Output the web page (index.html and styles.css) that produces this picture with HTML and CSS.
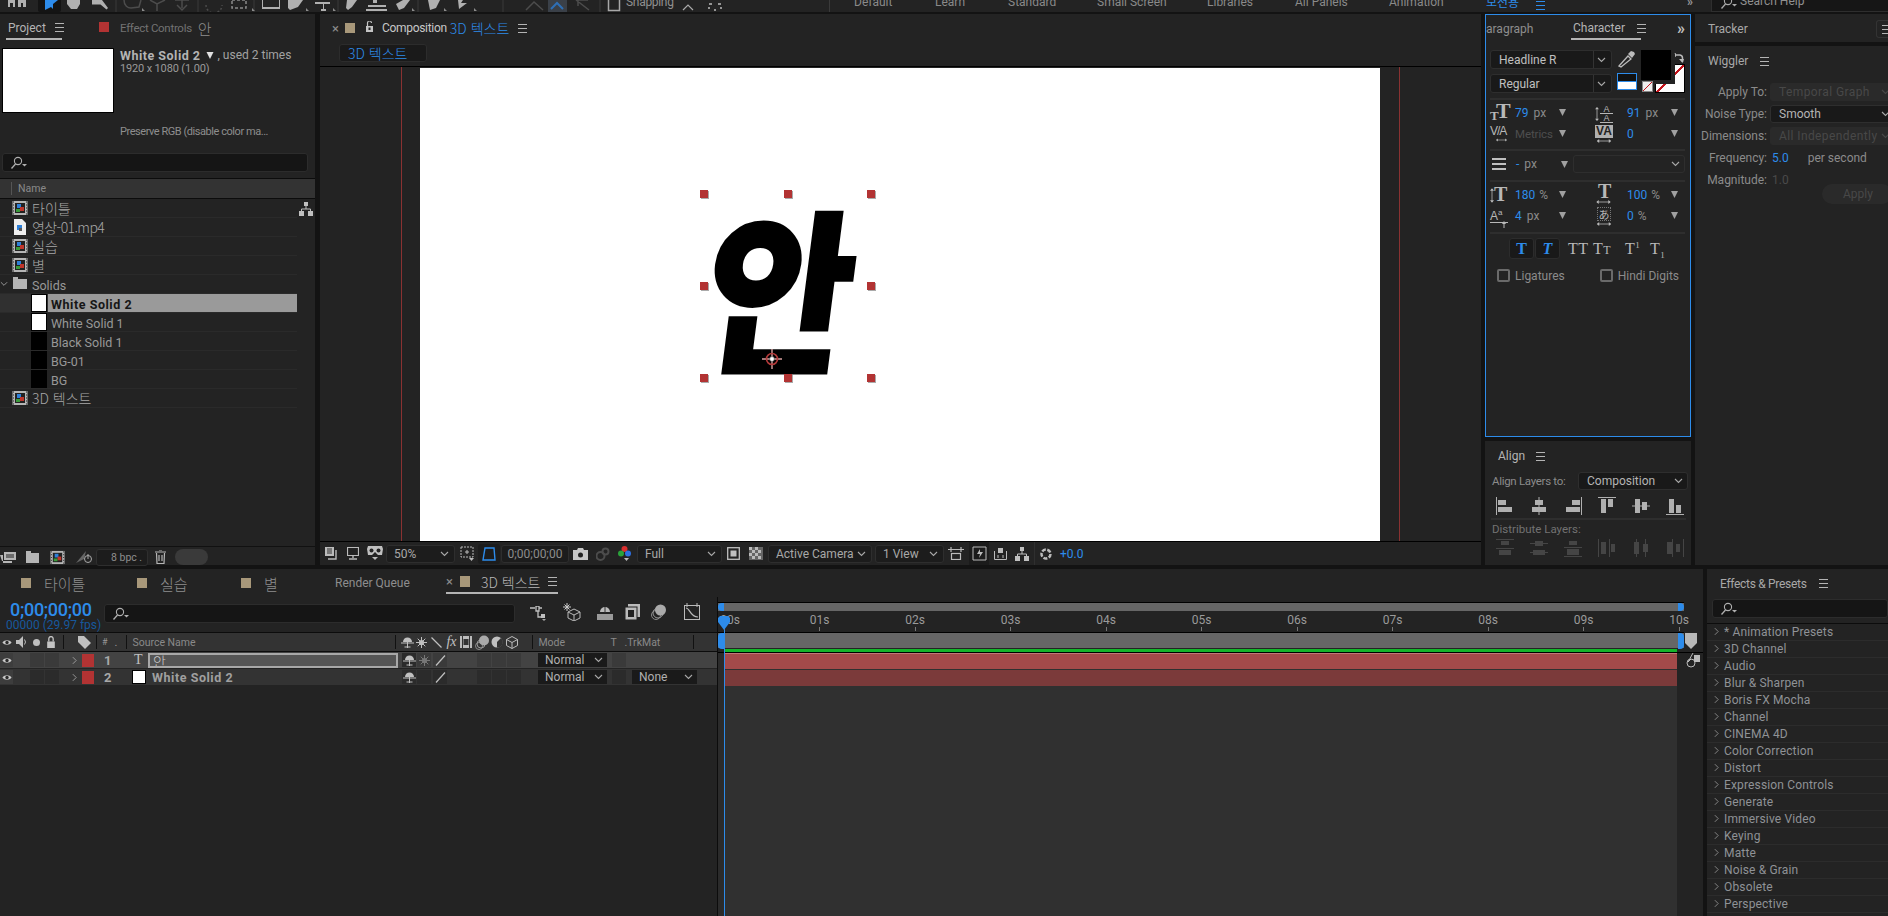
FILE: index.html
```html
<!DOCTYPE html>
<html lang="ko">
<head>
    <meta charset="UTF-8">
    <title>After Effects</title>
    <link rel="stylesheet" href="styles.css">
</head>
<body>
<svg class="defs" width="0" height="0">
    <symbol id="chev" viewBox="0 0 9 6"><path d="M1 1l3.500 3.500L8 1" fill="none" stroke="currentColor" stroke-width="1.100"/></symbol>
    <symbol id="side" viewBox="0 0 6 10"><path d="M1 1l4 4-4 4" fill="none" stroke="currentColor"/></symbol>
    <symbol id="tri" viewBox="0 0 7 7"><path d="M0 0h7L3.500 7z" fill="currentColor"/></symbol>
    <symbol id="arr-h" viewBox="0 0 18 5"><path d="M1 2.500h16" stroke="currentColor"/><path d="M0 2.500L3 0v5zM18 2.500L15 0v5z" fill="currentColor"/></symbol>
    <symbol id="arr-v" viewBox="0 0 5 18"><path d="M2.500 1v16" stroke="currentColor"/><path d="M2.500 0L0 3h5zM2.500 18L0 15h5z" fill="currentColor"/></symbol>
    <symbol id="search" viewBox="0 0 18 14"><circle cx="8" cy="5" r="3.600" fill="none" stroke="currentColor" stroke-width="1.100"/><path d="M5.500 8L1.500 12.500" stroke="currentColor" stroke-width="1.300"/><path d="M12 8h5l-2.500 2.500z" fill="currentColor"/></symbol>
    <symbol id="comp" viewBox="0 0 16 16"><rect x=".5" y="1" width="15" height="14" fill="#b5b5b5"/><rect x="3" y="3" width="10" height="10" fill="#222"/><path d="M1 2h1M1 5h1M1 8h1M1 11h1M1 14h1M14 2h1M14 5h1M14 8h1M14 11h1M14 14h1" stroke="#222"/><rect x="5" y="4" width="4" height="4" fill="#2d7fd8"/><rect x="8" y="7" width="4" height="4" fill="#c0362c"/><rect x="4" y="9" width="4" height="3" fill="#3a9a3a"/></symbol>
    <symbol id="eye" viewBox="0 0 12 8"><path d="M.5 4C3 .5 9 .5 11.500 4 9 7.500 3 7.500.5 4z" fill="#c8c8c8"/><circle cx="6" cy="4" r="2" fill="#2a2a2a"/></symbol>
    <symbol id="shy" viewBox="0 0 13 12"><path d="M2 6a4.500 4.500 0 0 1 9 0z" fill="currentColor"/><path d="M0 7h13M6.500 2v10M3.500 11h6" stroke="currentColor"/></symbol>
    <symbol id="sun" viewBox="0 0 11 11"><circle cx="5.500" cy="5.500" r="2.600" fill="currentColor"/><path d="M5.500 0v11M0 5.500h11M1.700 1.700l7.600 7.600M9.300 1.700l-7.600 7.600" stroke="currentColor"/></symbol>
    <symbol id="slash" viewBox="0 0 11 11"><path d="M1 10.500L10 .5" stroke="currentColor" stroke-width="1.200"/></symbol>
    <symbol id="anchor" viewBox="0 0 20 20"><path d="M10 0v20M0 10h20" stroke="#d8a0a0" stroke-width="1.400"/><circle cx="10" cy="10" r="5.500" fill="none" stroke="#b33a3a" stroke-width="1.600"/><circle cx="10" cy="10" r="2.400" fill="#fff" stroke="#555" stroke-width=".7"/></symbol>
    <symbol id="al1" viewBox="0 0 18 18"><path d="M.5 0v18" stroke="currentColor"/><rect x="2" y="3" width="8" height="5" fill="currentColor"/><rect x="2" y="10" width="14" height="5" fill="currentColor"/></symbol>
    <symbol id="al2" viewBox="0 0 18 18"><path d="M9 0v18" stroke="currentColor"/><rect x="5" y="3" width="8" height="5" fill="currentColor"/><rect x="2" y="10" width="14" height="5" fill="currentColor"/></symbol>
    <symbol id="al3" viewBox="0 0 18 18"><path d="M17.500 0v18" stroke="currentColor"/><rect x="8" y="3" width="8" height="5" fill="currentColor"/><rect x="2" y="10" width="14" height="5" fill="currentColor"/></symbol>
    <symbol id="al4" viewBox="0 0 18 18"><path d="M0 .5h18" stroke="currentColor"/><rect x="3" y="2" width="5" height="14" fill="currentColor"/><rect x="10" y="2" width="5" height="8" fill="currentColor"/></symbol>
    <symbol id="al5" viewBox="0 0 18 18"><path d="M0 9h18" stroke="currentColor"/><rect x="3" y="2" width="5" height="14" fill="currentColor"/><rect x="10" y="5" width="5" height="8" fill="currentColor"/></symbol>
    <symbol id="al6" viewBox="0 0 18 18"><path d="M0 17.500h18" stroke="currentColor"/><rect x="3" y="2" width="5" height="14" fill="currentColor"/><rect x="10" y="8" width="5" height="8" fill="currentColor"/></symbol>
    <symbol id="di1" viewBox="0 0 18 18"><path d="M0 .5h18M0 9.500h18" stroke="currentColor"/><rect x="5" y="2" width="8" height="4" fill="currentColor"/><rect x="3" y="11" width="12" height="5" fill="currentColor"/></symbol>
    <symbol id="di2" viewBox="0 0 18 18"><path d="M0 4.500h18M0 13.500h18" stroke="currentColor"/><rect x="5" y="2" width="8" height="5" fill="currentColor"/><rect x="3" y="11" width="12" height="5" fill="currentColor"/></symbol>
    <symbol id="di3" viewBox="0 0 18 18"><path d="M0 8.500h18M0 17.500h18" stroke="currentColor"/><rect x="5" y="2" width="8" height="4" fill="currentColor"/><rect x="3" y="10" width="12" height="6" fill="currentColor"/></symbol>
    <symbol id="di4" viewBox="0 0 18 18"><path d="M.5 0v18M11.500 0v18" stroke="currentColor"/><rect x="3" y="3" width="5" height="12" fill="currentColor"/><rect x="13" y="5" width="4" height="8" fill="currentColor"/></symbol>
    <symbol id="di5" viewBox="0 0 18 18"><path d="M4.500 0v18M13.500 0v18" stroke="currentColor"/><rect x="2" y="3" width="5" height="12" fill="currentColor"/><rect x="11" y="5" width="5" height="8" fill="currentColor"/></symbol>
    <symbol id="di6" viewBox="0 0 18 18"><path d="M6.500 0v18M17.500 0v18" stroke="currentColor"/><rect x="1" y="3" width="5" height="12" fill="currentColor"/><rect x="10" y="5" width="4" height="8" fill="currentColor"/></symbol>
</svg>

<div class="toolbar">
    <svg class="tool-strip" width="626" height="12" viewBox="0 0 626 12">
        <g fill="#b0b0b0">
            <path d="M8 0h7v7h-2V3h-3v4H8zM18 0h8v7h-3V3h-2v4h-3z"/>
            <rect x="38" y="-2" width="23" height="14" rx="2" fill="#141414"/>
            <path d="M45 0h13l-5 4 0 5-2-2-6 3z" fill="#2d8ceb"/>
            <path d="M67 0h13v4l-3 5h-6l-4-5z"/>
            <path d="M92 0h10l6 8-1.500 1.500-6-5H92z"/>
            <path d="M262 0h1v7h16V0h1v9h-18z"/><path d="M288 0h15l-5 7-8 3-2-2z"/><path d="M315 2h15v2h-6v5h2v2h-5V9h2V4h-8z"/>
            <path d="M347 0h10l-5 7-4 3-2-2z"/><path d="M373 0h4v3h-4zM368 5h18v2h-18zM366 9h21v2h-21z"/><path d="M396 4l7-4h7l-6 8-5 2z"/>
            <path d="M428 0h12l-4 8-6 2z"/><path d="M458 0h5l-2 3 6 0-8 6z"/>
        </g>
        <g fill="none" stroke="#4c4c4c" stroke-width="1.500">
            <path d="M124 0c0 6 4 8 7 8l8-1 2-7M150 0l7 4 8-4M157 3v8M175 0h14M182 0v8M177 5l5 5 5-5"/>
            <path d="M206 5a8 8 0 0 0 16 0" stroke-dasharray="2 2"/><path d="M232 0h14v8h-14z" stroke="#8a8a8a" stroke-dasharray="3 2"/>
            <path d="M526 10l8-8 9 8M576 0l13 10M588 0h-10v6"/>
        </g>
        <rect x="548" y="-2" width="19" height="14" fill="#3a4048"/>
        <path d="M551 9l6-6 6 6" fill="none" stroke="#2e6fb6" stroke-width="2"/>
        <g stroke="#3a3a3a"><path d="M116 0v12M198 0v12M254 0v12M338 0v12M418 0v12M503 0v12M600 0v12"/></g>
        <g fill="#8a8a8a"><path d="M142 8l3 3h-3zM252 8l3 3h-3zM306 8l3 3h-3zM333 8l3 3h-3zM412 8l3 3h-3zM444 8l3 3h-3zM474 8l3 3h-3z"/></g>
        <path d="M608.500 0v10.500h11V0" fill="none" stroke="#a8a8a8" stroke-width="1.500"/>
    </svg>
    <span class="tool-text snapping">Snapping</span>
    <svg class="snap-up" width="12" height="8"><path d="M1 7l5-5 5 5" fill="none" stroke="#aaa" stroke-width="1.200"/></svg>
    <svg class="snap-dots" width="14" height="8"><path d="M1 1h3M10 1h3M1 6v-2M13 6v-2M6 7h2" stroke="#bbb" stroke-width="1.500"/></svg>
    <div class="toolbar-sep"></div>
    <span class="tool-text ws w-default">Default</span>
    <span class="tool-text ws w-learn">Learn</span>
    <span class="tool-text ws w-standard">Standard</span>
    <span class="tool-text ws w-small">Small Screen</span>
    <span class="tool-text ws w-lib">Libraries</span>
    <span class="tool-text ws w-all">All Panels</span>
    <span class="tool-text ws w-anim">Animation</span>
    <span class="tool-text ws w-motion">모션용</span>
    <span class="menu blue w-menu"></span>
    <span class="tool-text more">&raquo;</span>
    <div class="help-box">
        <svg class="ic-search" width="18" height="14"><use href="#search"/></svg>
        <span class="tool-text">Search Help</span>
    </div>
</div>

<div class="upper">
    <section class="panel project">
        <div class="tabs project-tabs">
            <span class="tab active proj-tab">Project <i class="menu"></i></span>
            <span class="swatch red fx-swatch"></span>
            <span class="tab dim">Effect Controls <span class="ko">안</span></span>
        </div>
        <div class="info">
            <div class="thumb"></div>
            <div class="info-text">
                <div><b class="info-name">White Solid 2</b><svg class="info-tri" width="8" height="7"><use href="#tri"/></svg> <span class="info-used">, used 2 times</span></div>
                <div class="info-size">1920 x 1080 (1.00)</div>
                <div class="info-rgb">Preserve RGB (disable color ma...</div>
            </div>
        </div>
        <div class="search project-search"><svg width="18" height="14"><use href="#search"/></svg></div>
        <div class="list-head"><span class="list-name">Name</span></div>
        <div class="rows">
            <svg class="flow-icon" width="14" height="14" viewBox="0 0 14 14"><path d="M5 0h4v4H5zM0 9h5v5H0zM9 9h5v5H9z" fill="#c0c0c0"/><path d="M7 4v3M2.500 9V7h9v2" stroke="#c0c0c0" fill="none"/></svg>
            <div class="row"><svg class="r-ic" width="16" height="16"><use href="#comp"/></svg><span class="ko">타이틀</span></div>
            <div class="row"><svg class="r-ic file" width="12" height="16" viewBox="0 0 12 16"><path d="M0 0h8l4 4v12H0z" fill="#eee"/><rect x="3" y="6" width="5" height="5" fill="#2d7fd8"/><rect x="5" y="9" width="3" height="3" fill="#555"/></svg><span class="ko tight">영상-01.mp4</span></div>
            <div class="row"><svg class="r-ic" width="16" height="16"><use href="#comp"/></svg><span class="ko">실습</span></div>
            <div class="row"><svg class="r-ic" width="16" height="16"><use href="#comp"/></svg><span class="ko">별</span></div>
            <div class="row folder-row"><svg class="fold-chev" width="8" height="6"><use href="#chev"/></svg><svg class="folder" width="14" height="12" viewBox="0 0 14 12"><path d="M0 2h5V0H0zM0 2h14v10H0z" fill="#b5b5b5"/></svg><span class="low">Solids</span></div>
            <div class="row solid sel"><span class="chip white"></span><span class="sel-name low">White Solid 2</span></div>
            <div class="row solid"><span class="chip white"></span><span class="low">White Solid 1</span></div>
            <div class="row solid"><span class="chip"></span><span class="low">Black Solid 1</span></div>
            <div class="row solid"><span class="chip"></span><span class="low">BG-01</span></div>
            <div class="row solid"><span class="chip"></span><span class="low">BG</span></div>
            <div class="row"><svg class="r-ic" width="16" height="16"><use href="#comp"/></svg><span class="ko">3D 텍스트</span></div>
        </div>
        <div class="project-foot">
            <svg width="16" height="13" viewBox="0 0 16 13"><path d="M4 1h12v8H4zM0 4h3v8h9v-2H2" fill="#b5b5b5"/><path d="M6 4h8M6 6h8" stroke="#222"/></svg>
            <svg class="f-folder" width="13" height="12" viewBox="0 0 13 12"><path d="M0 2h5V0H0zM0 2h13v10H0z" fill="#b5b5b5"/></svg>
            <svg class="f-comp" width="17" height="15"><use href="#comp"/></svg>
            <svg class="f-rocket" width="16" height="13" viewBox="0 0 16 13"><path d="M0 12L10 0 8 8z" fill="#666"/><circle cx="12" cy="8" r="3.500" fill="none" stroke="#aaa"/><path d="M12 3v5" stroke="#aaa"/></svg>
            <span class="bpc">8 bpc <i>.</i></span>
            <svg class="trash" width="11" height="14" viewBox="0 0 11 14"><path d="M0 2h11M4 0h3M1.500 3l.5 10.500h7l.5-10.500M4 5v6M7 5v6" fill="none" stroke="#b5b5b5" stroke-width="1.200"/></svg>
            <span class="pill"></span>
        </div>
    </section>

    <section class="panel comp">
        <div class="tabs comp-tabs">
            <span class="close">&times;</span>
            <span class="swatch tan"></span>
            <svg class="lock" width="9" height="11" viewBox="0 0 9 11"><path d="M1 5h7v6H1z" fill="#c4c4c4"/><path d="M2.500 5V2a2 2 0 0 1 4 0" fill="none" stroke="#c4c4c4" stroke-width="1.200"/><rect x="3.500" y="6.500" width="2" height="2.500" fill="#222"/></svg>
            <span class="tab comp-title"><span class="comp-word">Composition</span> <span class="blue-text ko">3D 텍스트</span></span>
            <i class="menu"></i>
        </div>
        <div class="crumbs"><span class="crumb blue-text ko">3D 텍스트</span></div>
        <div class="viewer">
            <div class="guide left"></div>
            <div class="guide right"></div>
            <div class="canvas">
                <span class="glyph">안</span>
                <i class="handle h-tl"></i><i class="handle h-tc"></i><i class="handle h-tr"></i>
                <i class="handle h-ml"></i><i class="handle h-mr"></i>
                <i class="handle h-bl"></i><i class="handle h-bc"></i><i class="handle h-br"></i>
                <svg class="anchor" width="20" height="20"><use href="#anchor"/></svg>
            </div>
        </div>
        <div class="viewer-foot">
            <svg class="v1" width="13" height="13" viewBox="0 0 13 13"><path d="M0 0h9v9H0z" fill="#bbb"/><path d="M2 2h5M2 4h5M2 6h5" stroke="#333"/><path d="M11 3v9H3" fill="none" stroke="#bbb" stroke-width="1.400"/></svg>
            <svg class="v2" width="12" height="13" viewBox="0 0 12 13"><path d="M.5.500h11v8H.5z" fill="none" stroke="#bbb" stroke-width="1.200"/><path d="M6 9v2M2 12h8" stroke="#bbb" stroke-width="1.400"/></svg>
            <svg class="v3" width="16" height="15" viewBox="0 0 16 15"><path d="M1 0h14l1 3-1 6h-4l-3-3-3 3H1L0 3z" fill="#c0c0c0"/><circle cx="4.500" cy="4.500" r="2" fill="#222"/><circle cx="11.500" cy="4.500" r="2" fill="#222"/><path d="M5 11h6l-3 3z" fill="#bbb"/></svg>
            <span class="drop zoom-drop"><span>50%</span><svg class="chev" width="9" height="6"><use href="#chev"/></svg></span>
            <svg class="v4" width="14" height="15" viewBox="0 0 14 15"><path d="M1 1h12v10H1z" fill="none" stroke="#bbb" stroke-dasharray="2 1"/><path d="M7 4v4M5 6h4" stroke="#bbb"/><path d="M9 12h5l-2.500 3z" fill="#bbb"/></svg>
            <span class="mask-btn"><svg width="14" height="14" viewBox="0 0 14 14"><path d="M3 1h9l1 12H1z" fill="none" stroke="#2d8ceb" stroke-width="1.400"/></svg></span>
            <span class="drop time-box">0;00;00;00</span>
            <svg class="v5" width="15" height="12" viewBox="0 0 15 12"><path d="M0 2h4l1-2h5l1 2h4v10H0z" fill="#c8c8c8"/><circle cx="7.500" cy="7" r="2.500" fill="#222"/></svg>
            <svg class="v6" width="14" height="14" viewBox="0 0 14 14"><circle cx="4.500" cy="9" r="4" fill="none" stroke="#4c4c4c" stroke-width="2"/><circle cx="9.500" cy="4.500" r="3" fill="none" stroke="#4c4c4c" stroke-width="2"/></svg>
            <svg class="v7" width="13" height="15" viewBox="0 0 13 15"><circle cx="6.500" cy="3" r="3" fill="#d92e2e"/><circle cx="3" cy="7.500" r="3" fill="#2aa23a"/><circle cx="10" cy="7.500" r="3" fill="#2d6fe0"/><path d="M6 12h5l-2.500 3z" fill="#bbb"/></svg>
            <span class="drop full-drop"><span>Full</span><svg class="chev" width="9" height="6"><use href="#chev"/></svg></span>
            <svg class="v8" width="13" height="13" viewBox="0 0 13 13"><rect x=".7" y=".7" width="11.600" height="11.600" fill="none" stroke="#c0c0c0" stroke-width="1.300"/><rect x="3.500" y="3.500" width="6" height="6" fill="#c0c0c0"/></svg>
            <svg class="v9" width="14" height="13" viewBox="0 0 14 13"><rect width="14" height="13" fill="#666"/><path d="M0 0h3v3H0zM6 0h3v3H6zM3 3h3v3H3zM9 3h3v3H9zM0 6h3v3H0zM6 6h3v3H6zM3 9h3v3H3zM9 9h3v3H9z" fill="#bbb"/></svg>
            <span class="drop cam-drop"><span>Active Camera</span><svg class="chev" width="9" height="6"><use href="#chev"/></svg></span>
            <span class="drop view-drop"><span>1 View</span><svg class="chev" width="9" height="6"><use href="#chev"/></svg></span>
            <svg class="v10" width="16" height="13" viewBox="0 0 16 13"><path d="M0 2.500h16M3 0v5M13 0v5" stroke="#bbb" stroke-width="1.200"/><rect x="3.500" y="6.500" width="9" height="6" fill="none" stroke="#bbb" stroke-width="1.200"/></svg>
            <span class="fast-btn"><svg width="15" height="15" viewBox="0 0 15 15"><path d="M1 1h13v13H1z" fill="none" stroke="#bbb"/><path d="M8 3L5 8h3l-1 4 4-6H8z" fill="#bbb"/></svg></span>
            <svg class="v11" width="13" height="12" viewBox="0 0 13 12"><path d="M.5 3v8.500h12V3M4 7v3M9 7v3" fill="none" stroke="#bbb"/><rect x="4" y="0" width="5" height="5" fill="#bbb"/></svg>
            <svg class="v12" width="14" height="14" viewBox="0 0 14 14"><path d="M5 0h4v4H5zM0 9h5v5H0zM9 9h5v5H9z" fill="#c0c0c0"/><path d="M7 4v3M2.500 9V7h9v2" stroke="#c0c0c0" fill="none"/></svg>
            <i class="foot-sep"></i>
            <svg class="v13" width="12" height="14" viewBox="0 0 12 14"><circle cx="6" cy="7" r="4.500" fill="none" stroke="#bbb" stroke-width="2.500" stroke-dasharray="4 1.500"/></svg>
            <span class="exposure blue-text">+0.0</span>
        </div>
    </section>

    <div class="char-col">
        <section class="panel character">
            <div class="tabs char-tabs">
                <span class="tab para">aragraph</span>
                <span class="tab active char-tab">Character <i class="menu"></i></span>
                <span class="more-tabs">&raquo;</span>
            </div>
            <div class="font-block">
                <div class="font-selects">
                    <span class="select"><span>Headline R</span><svg class="chev" width="9" height="6"><use href="#chev"/></svg></span>
                    <span class="select"><span>Regular</span><svg class="chev" width="9" height="6"><use href="#chev"/></svg></span>
                </div>
                <div class="font-tools">
                    <svg class="dropper" width="19" height="18" viewBox="0 0 19 18"><path d="M2 16l9-10 3 3-10 8z" fill="none" stroke="#bbb" stroke-width="1.300"/><path d="M11 4l3-3 3 1 1 2-3 4z" fill="#bbb"/></svg>
                    <span class="stroke-toggle"></span>
                </div>
                <div class="color-box">
                    <span class="stroke-swatch"></span>
                    <span class="fill-swatch"></span>
                    <span class="mini-swatch"></span>
                    <svg class="swap" width="12" height="11" viewBox="0 0 12 11"><path d="M1 2h7a3 3 0 0 1 2.500 3v4" fill="none" stroke="#bbb" stroke-width="1.500"/><path d="M7 6l3.500 4L12 6zM4 0L0 2l4 2z" fill="#bbb"/></svg>
                </div>
            </div>
            <div class="sep"></div>
            <div class="metrics m-top">
                <div class="metric"><span class="m-ic t-big"><b>T</b><b class="up">T</b></span><span class="val">79</span><span class="unit">px</span><svg class="tri" width="7" height="7"><use href="#tri"/></svg></div>
                <div class="metric col-b"><span class="m-ic t-lead"><svg class="arr-v" width="4" height="14"><use href="#arr-v"/></svg><span>A</span><span>A</span></span><span class="val">91</span><span class="unit">px</span><svg class="tri" width="7" height="7"><use href="#tri"/></svg></div>
                <div class="metric"><span class="m-ic t-kern">V/A<svg class="arr-h" width="11" height="4"><use href="#arr-h"/></svg></span><span class="val off">Metrics</span><svg class="tri" width="7" height="7"><use href="#tri"/></svg></div>
                <div class="metric col-b"><span class="m-ic t-track"><span>VA</span><svg class="arr-h" width="18" height="4"><use href="#arr-h"/></svg></span><span class="val">0</span><svg class="tri" width="7" height="7"><use href="#tri"/></svg></div>
            </div>
            <div class="sep s-two"></div>
            <div class="stroke-row">
                <svg class="stroke-ic" width="14" height="12" viewBox="0 0 14 12"><path d="M0 0h14v2H0zM0 5h14v2H0zM0 10h14v2H0z" fill="#c0c0c0"/></svg>
                <span class="val dash">-</span><span class="unit">px</span>
                <svg class="tri" width="7" height="7"><use href="#tri"/></svg>
                <span class="select stroke-select"><svg class="chev" width="9" height="6"><use href="#chev"/></svg></span>
            </div>
            <div class="sep s-three"></div>
            <div class="metrics m-bottom">
                <div class="metric"><span class="m-ic t-vs"><svg class="arr-v" width="4" height="15"><use href="#arr-v"/></svg><b>T</b></span><span class="val">180</span><span class="unit pct">%</span><svg class="tri" width="7" height="7"><use href="#tri"/></svg></div>
                <div class="metric col-b"><span class="m-ic t-hs"><b>T</b><svg class="arr-h" width="17" height="4"><use href="#arr-h"/></svg></span><span class="val">100</span><span class="unit pct">%</span><svg class="tri" width="7" height="7"><use href="#tri"/></svg></div>
                <div class="metric"><span class="m-ic t-base">A<sup>a</sup><svg class="arr-base" width="4" height="7" viewBox="0 0 4 7"><path d="M2 1v6" stroke="currentColor"/><path d="M2 0L0 3h4z" fill="currentColor"/></svg></span><span class="val">4</span><span class="unit">px</span><svg class="tri" width="7" height="7"><use href="#tri"/></svg></div>
                <div class="metric col-b"><span class="m-ic t-tsume"><span>あ</span><svg class="arr-h" width="16" height="4"><use href="#arr-h"/></svg></span><span class="val">0</span><span class="unit pct">%</span><svg class="tri" width="7" height="7"><use href="#tri"/></svg></div>
            </div>
            <div class="sep s-four"></div>
            <div class="type-row">
                <span class="type-btn on bold-t">T</span>
                <span class="type-btn on ital-t">T</span>
                <span class="type-plain tt">TT</span>
                <span class="type-plain ts">T<small>T</small></span>
                <span class="type-plain sup">T<sup>1</sup></span>
                <span class="type-plain sub">T<sub>1</sub></span>
            </div>
            <div class="check-row">
                <span class="check"></span><span class="check-label">Ligatures</span>
                <span class="check c2"></span><span class="check-label">Hindi Digits</span>
            </div>
        </section>
        <section class="panel align">
            <div class="align-head"><span>Align</span><i class="menu"></i></div>
            <div class="align-to"><span class="label">Align Layers to:</span><span class="select comp-select"><span>Composition</span><svg class="chev" width="9" height="6"><use href="#chev"/></svg></span></div>
            <div class="align-icons">
                <svg width="18" height="18"><use href="#al1"/></svg><svg width="18" height="18"><use href="#al2"/></svg><svg width="18" height="18"><use href="#al3"/></svg><svg width="18" height="18"><use href="#al4"/></svg><svg width="18" height="18"><use href="#al5"/></svg><svg width="18" height="18"><use href="#al6"/></svg>
            </div>
            <div class="sep s-align"></div>
            <div class="label dist-label">Distribute Layers:</div>
            <div class="align-icons dist">
                <svg width="18" height="18"><use href="#di1"/></svg><svg width="18" height="18"><use href="#di2"/></svg><svg width="18" height="18"><use href="#di3"/></svg><svg width="18" height="18"><use href="#di4"/></svg><svg width="18" height="18"><use href="#di5"/></svg><svg width="18" height="18"><use href="#di6"/></svg>
            </div>
        </section>
    </div>

    <div class="right-col">
        <section class="panel tracker">
            <span class="tracker-title">Tracker</span>
            <span class="tracker-btn"><i class="menu"></i></span>
        </section>
        <section class="panel wiggler">
            <div class="wig-head"><span>Wiggler</span><i class="menu"></i></div>
            <div class="wig-row"><span class="label">Apply To:</span><span class="select off"><span>Temporal Graph</span><svg class="chev" width="9" height="6"><use href="#chev"/></svg></span></div>
            <div class="wig-row"><span class="label">Noise Type:</span><span class="select"><span>Smooth</span><svg class="chev" width="9" height="6"><use href="#chev"/></svg></span></div>
            <div class="wig-row"><span class="label">Dimensions:</span><span class="select off"><span>All Independently</span><svg class="chev" width="9" height="6"><use href="#chev"/></svg></span></div>
            <div class="wig-row"><span class="label">Frequency:</span><span class="blue-text wig-val">5.0</span><span class="label per">per second</span></div>
            <div class="wig-row"><span class="label">Magnitude:</span><span class="off-text wig-val">1.0</span></div>
            <span class="apply-btn">Apply</span>
        </section>
    </div>
</div>

<div class="lower">
    <section class="panel timeline">
        <div class="tl-tabs">
            <span class="swatch tan t1"></span><span class="tl-tab ko n1">타이틀</span>
            <span class="swatch tan t2"></span><span class="tl-tab ko n2">실습</span>
            <span class="swatch tan t3"></span><span class="tl-tab ko n3">별</span>
            <span class="tl-tab rq">Render Queue</span>
            <div class="tl-active">
                <span class="close">&times;</span>
                <span class="swatch tan"></span>
                <span class="tl-cur ko">3D 텍스트</span>
                <i class="menu"></i>
            </div>
        </div>
        <div class="tl-body">
            <div class="tl-left">
                <div class="tl-controls">
                    <div class="timecode">
                        <div class="tc-main">0;00;00;00</div>
                        <div class="tc-sub">00000 (29.97 fps)</div>
                    </div>
                    <div class="search tl-search"><svg width="18" height="14"><use href="#search"/></svg></div>
                    <svg class="tc1" width="17" height="15" viewBox="0 0 17 15"><path d="M0 2h5M6 0h3v5H6zM9 2h3M8 5v6h5" stroke="#c0c0c0" fill="none" stroke-width="1.300"/><rect x="11" y="8" width="4" height="4" fill="#c0c0c0"/><path d="M12 13h4l-2 2z" fill="#aaa"/></svg>
                    <svg class="tc2" width="18" height="18" viewBox="0 0 18 18"><path d="M4 0v8M0 4h8M1.500 1.500l5 5M6.500 1.500l-5 5" stroke="#ccc"/><path d="M11 6l6 3v6l-6 3-6-3V9zM5 9l6 3 6-3M11 12v6" fill="none" stroke="#bbb"/></svg>
                    <svg class="tc3" width="16" height="14" viewBox="0 0 16 14"><path d="M3 6a5 5 0 0 1 10 0z" fill="#bbb"/><path d="M8 1v6" stroke="#333"/><rect y="8" width="16" height="6" fill="#9a9a9a"/></svg>
                    <svg class="tc4" width="15" height="16" viewBox="0 0 15 16"><rect x="3" y="0" width="12" height="13" fill="#bbb"/><rect y="3" width="12" height="13" fill="#bbb" stroke="#222"/><path d="M3 6h6v7H3z" fill="#222"/></svg>
                    <svg class="tc5" width="15" height="16" viewBox="0 0 15 16"><circle cx="5" cy="11" r="4.500" fill="none" stroke="#888"/><circle cx="7" cy="9" r="5" fill="none" stroke="#999"/><circle cx="9.500" cy="6" r="5.500" fill="#aaa"/></svg>
                    <svg class="tc6" width="16" height="17" viewBox="0 0 16 17"><rect x=".5" y="2.500" width="15" height="14" fill="none" stroke="#bbb"/><path d="M2 5c4 0 4 9 12 9" fill="none" stroke="#bbb" stroke-width="1.200"/><path d="M3 0v4M13 0v4" stroke="#bbb"/></svg>
                </div>
                <div class="tl-head">
                    <svg class="hd eye-hd" width="10" height="7"><use href="#eye"/></svg>
                    <svg class="hd spk" width="11" height="12" viewBox="0 0 11 12"><path d="M0 4h3l4-4v12L3 8H0z" fill="#c0c0c0"/><path d="M8.500 3.500a4 4 0 0 1 0 5" stroke="#c0c0c0" fill="none"/></svg>
                    <span class="hd dot"></span>
                    <svg class="hd lock-hd" width="10" height="12" viewBox="0 0 9 11"><path d="M1 5h7v6H1z" fill="#c4c4c4"/><path d="M2.500 5V2.500a2 2 0 0 1 4 0V5" fill="none" stroke="#c4c4c4" stroke-width="1.200"/></svg>
                    <i class="head-sep s1"></i>
                    <svg class="hd tag" width="13" height="13" viewBox="0 0 13 13"><path d="M0 0h6l7 7-6 6-7-7z" fill="#c0c0c0"/></svg>
                    <i class="head-sep s2"></i>
                    <span class="hd num">#</span>
                    <span class="hd period">.</span>
                    <i class="head-sep s3"></i>
                    <span class="src src-name">Source Name</span>
                    <i class="head-sep s4"></i>
                    <svg class="sw sw1" width="13" height="12"><use href="#shy"/></svg>
                    <svg class="sw sw2" width="11" height="11"><use href="#sun"/></svg>
                    <svg class="sw sw3" width="11" height="11" viewBox="0 0 11 11"><path d="M.5.500L10.500 10.500" stroke="currentColor" stroke-width="1.300"/></svg>
                    <span class="sw sw4">fx</span>
                    <svg class="sw sw5" width="12" height="12" viewBox="0 0 12 12"><rect width="12" height="12" fill="#bbb"/><path d="M2.500 0v12M9.500 0v12" stroke="#333"/><rect x="3.500" y="3" width="5" height="6" fill="#333"/></svg>
                    <svg class="sw sw6" width="14" height="15" viewBox="0 0 14 15"><circle cx="4" cy="11" r="3.500" fill="none" stroke="#888"/><circle cx="6" cy="9" r="4" fill="none" stroke="#999"/><circle cx="9" cy="5.500" r="5" fill="#aaa"/></svg>
                    <svg class="sw sw7" width="12" height="12" viewBox="0 0 12 12"><circle cx="6" cy="6" r="5.500" fill="#c0c0c0"/><path d="M6 6L10 2A5.500 5.500 0 0 1 6 11.500z" fill="#333"/></svg>
                    <svg class="sw sw8" width="12" height="13" viewBox="0 0 12 13"><path d="M6 .5l5.500 3v6l-5.500 3-5.500-3v-6zM.5 3.500l5.500 3 5.500-3M6 6.500v6" fill="none" stroke="#bbb"/></svg>
                    <i class="head-sep s5"></i>
                    <span class="src mode">Mode</span>
                    <span class="src t-col">T</span>
                    <span class="src trk">.TrkMat</span>
                    <i class="head-sep s6"></i>
                </div>
                <div class="layer first">
                    <span class="cell eye-cell"><svg width="10" height="7"><use href="#eye"/></svg></span>
                    <span class="cell c-a"></span><span class="cell c-b"></span>
                    <svg class="lay-chev" width="5" height="9"><use href="#side"/></svg>
                    <span class="label-red"></span>
                    <span class="lay-num">1</span>
                    <span class="lay-type">T</span>
                    <span class="name-edit ko">안</span>
                    <span class="cell c-shy"><svg width="13" height="12"><use href="#shy"/></svg></span>
                    <span class="cell c-sun"><svg width="11" height="11"><use href="#sun"/></svg></span>
                    <span class="cell c-slash"><svg width="11" height="11"><use href="#slash"/></svg></span>
                    <span class="cell c-1"></span><span class="cell c-2"></span><span class="cell c-2"></span>
                    <span class="mode-drop"><span>Normal</span><svg class="chev" width="9" height="6"><use href="#chev"/></svg></span>
                    <span class="cell c-t"></span>
                </div>
                <div class="layer">
                    <span class="cell eye-cell"><svg width="10" height="7"><use href="#eye"/></svg></span>
                    <span class="cell c-a"></span><span class="cell c-b"></span>
                    <svg class="lay-chev" width="5" height="9"><use href="#side"/></svg>
                    <span class="label-red"></span>
                    <span class="lay-num">2</span>
                    <span class="lay-chip"></span>
                    <span class="lay-name">White Solid 2</span>
                    <span class="cell c-shy"><svg width="13" height="12"><use href="#shy"/></svg></span>
                    <span class="cell c-sun"></span>
                    <span class="cell c-slash"><svg width="11" height="11"><use href="#slash"/></svg></span>
                    <span class="cell c-1"></span><span class="cell c-2"></span><span class="cell c-2"></span>
                    <span class="mode-drop"><span>Normal</span><svg class="chev" width="9" height="6"><use href="#chev"/></svg></span>
                    <span class="cell c-t"></span>
                    <span class="mode-drop none"><span>None</span><svg class="chev" width="9" height="6"><use href="#chev"/></svg></span>
                </div>
            </div>
            <div class="tl-right">
                <div class="nav-gap"></div>
                <div class="nav-bar"><i class="grip left"></i><i class="grip right"></i></div>
                <div class="ruler">
                    <span class="tick first"><em>00s</em><i></i></span><span class="tick"><em>01s</em><i></i></span><span class="tick"><em>02s</em><i></i></span><span class="tick"><em>03s</em><i></i></span><span class="tick"><em>04s</em><i></i></span><span class="tick"><em>05s</em><i></i></span><span class="tick"><em>06s</em><i></i></span><span class="tick"><em>07s</em><i></i></span><span class="tick"><em>08s</em><i></i></span><span class="tick"><em>09s</em><i></i></span><span class="tick"><em>10s</em><i></i></span>
                </div>
                <div class="work-area">
                    <div class="work-bar"><i class="grip left big"></i><i class="grip right big"></i></div>
                    <div class="green"></div>
                </div>
                <div class="tracks">
                    <div class="track one"></div>
                    <div class="track two"></div>
                </div>
                <svg class="cti" width="12" height="14" viewBox="0 0 12 14"><path d="M2 0h8l2 2v4l-6 8-6-8V2z" fill="#2d8ceb"/></svg>
                <i class="playhead"></i>
                <svg class="end-mark" width="12" height="16" viewBox="0 0 12 16"><path d="M0 0h12v10l-6 6-6-6z" fill="#b8b8b8"/></svg>
                <svg class="lift-mark" width="15" height="16" viewBox="0 0 15 16"><circle cx="5" cy="11" r="4" fill="none" stroke="#bbb"/><path d="M5 7L2 10l5-9" stroke="#bbb" fill="none"/><rect x="8" y="3" width="6" height="7" fill="#bbb"/></svg>
            </div>
        </div>
    </section>
    <section class="panel effects">
        <div class="fx-head"><span>Effects &amp; Presets</span><i class="menu"></i></div>
        <div class="search fx-search"><svg width="18" height="14"><use href="#search"/></svg></div>
        <div class="fx-list">
            <div class="fx-row"><svg width="5" height="9"><use href="#side"/></svg><span>* Animation Presets</span></div>
            <div class="fx-row"><svg width="5" height="9"><use href="#side"/></svg><span>3D Channel</span></div>
            <div class="fx-row"><svg width="5" height="9"><use href="#side"/></svg><span>Audio</span></div>
            <div class="fx-row"><svg width="5" height="9"><use href="#side"/></svg><span>Blur &amp; Sharpen</span></div>
            <div class="fx-row"><svg width="5" height="9"><use href="#side"/></svg><span>Boris FX Mocha</span></div>
            <div class="fx-row"><svg width="5" height="9"><use href="#side"/></svg><span>Channel</span></div>
            <div class="fx-row"><svg width="5" height="9"><use href="#side"/></svg><span>CINEMA 4D</span></div>
            <div class="fx-row"><svg width="5" height="9"><use href="#side"/></svg><span>Color Correction</span></div>
            <div class="fx-row"><svg width="5" height="9"><use href="#side"/></svg><span>Distort</span></div>
            <div class="fx-row"><svg width="5" height="9"><use href="#side"/></svg><span>Expression Controls</span></div>
            <div class="fx-row"><svg width="5" height="9"><use href="#side"/></svg><span>Generate</span></div>
            <div class="fx-row"><svg width="5" height="9"><use href="#side"/></svg><span>Immersive Video</span></div>
            <div class="fx-row"><svg width="5" height="9"><use href="#side"/></svg><span>Keying</span></div>
            <div class="fx-row"><svg width="5" height="9"><use href="#side"/></svg><span>Matte</span></div>
            <div class="fx-row"><svg width="5" height="9"><use href="#side"/></svg><span>Noise &amp; Grain</span></div>
            <div class="fx-row"><svg width="5" height="9"><use href="#side"/></svg><span>Obsolete</span></div>
            <div class="fx-row"><svg width="5" height="9"><use href="#side"/></svg><span>Perspective</span></div>
        </div>
    </section>
</div>
</body>
</html>
```

FILE: styles.css
```css
* {
    box-sizing: border-box;
}
html, body {
    margin: 0;
    padding: 0;
}
body {
    width: 1888px;
    height: 916px;
    overflow: hidden;
    background-color: #131313;
    color: #a2a2a2;
    font-family: Roboto, "Noto Sans CJK KR", sans-serif;
    font-size: 11px;
}
i, em {
    font-style: normal;
}
svg {
    display: block;
    flex: none;
}
.defs {
    position: absolute;
}
.panel {
    background-color: #232323;
    position: relative;
}
.ko {
    font-family: "Noto Sans CJK KR", sans-serif;
    font-weight: 300;
}
.blue-text {
    color: #2d8ceb;
}
.off-text {
    color: #4a4a4a;
}
.chev {
    color: #a8a8a8;
    margin-left: auto;
}
.menu {
    display: inline-block;
    width: 9px;
    height: 9px;
    border-top: 1px solid #b4b4b4;
    border-bottom: 1px solid #b4b4b4;
    background: linear-gradient(#b4b4b4, #b4b4b4) center / 100% 1px no-repeat;
    flex: none;
}
.menu.blue {
    border-color: #2d8ceb;
    background-image: linear-gradient(#2d8ceb, #2d8ceb);
}
.swatch {
    display: block;
    width: 10px;
    height: 10px;
    flex: none;
}
.swatch.red {
    background-color: #b23333;
}
.swatch.tan {
    background-color: #a8987a;
}
.close {
    color: #8c8c8c;
    font-size: 13px;
    line-height: 1;
}
.search {
    display: flex;
    align-items: center;
    height: 19px;
    padding-left: 7px;
    background-color: #151515;
    border: 1px solid #2c2c2c;
    border-radius: 3px;
    color: #b0b0b0;
}
.select {
    display: flex;
    align-items: center;
    background-color: #191919;
    border: 1px solid #2e2e2e;
    border-radius: 3px;
    color: #b4b4b4;
    padding: 0 4px 0 8px;
}
.label {
    color: #8b8b8b;
    white-space: nowrap;
}

/* barra de ferramentas, cortada no topo */
.toolbar {
    display: flex;
    align-items: flex-end;
    height: 12px;
    overflow: hidden;
    background-color: #232323;
    color: #909090;
}
.tool-strip {
    align-self: flex-start;
}
.tool-text {
    flex: none;
    line-height: 16px;
    padding-bottom: 2px;
    font-size: 12px;
}
.snapping {
    width: 56px;
    letter-spacing: -.3px;
}
.snap-up {
    margin-bottom: 1px;
}
.snap-dots {
    margin: 0 0 1px 14px;
}
.toolbar-sep {
    align-self: stretch;
    width: 1px;
    margin-left: 107px;
    background-color: #3a3a3a;
}
.ws {
    color: #8a8a8a;
}
.w-default { margin-left: 24px; width: 81px; }
.w-learn { width: 73px; }
.w-standard { width: 89px; }
.w-small { width: 110px; }
.w-lib { width: 88px; }
.w-all { width: 94px; }
.w-anim { width: 97px; }
.w-motion { width: 50px; color: #2d8ceb; font-family: "Noto Sans CJK KR", sans-serif; }
.w-menu { margin-bottom: 2px; }
.more {
    margin-left: 142px;
    font-weight: 700;
    color: #999;
}
.help-box {
    display: flex;
    align-items: flex-end;
    align-self: stretch;
    flex: 1;
    margin-left: 18px;
    padding-left: 8px;
    background-color: #161616;
    border-left: 1px solid #2e2e2e;
    border-bottom: 1px solid #2e2e2e;
    gap: 2px;
}
.ic-search {
    margin-bottom: 1px;
    color: #aaa;
}

.upper {
    display: flex;
    height: 551px;
    margin-top: 2px;
}
.lower {
    display: flex;
    height: 347px;
    margin-top: 4px;
}
.tabs {
    display: flex;
    align-items: center;
    height: 28px;
}
.tab {
    display: flex;
    align-items: center;
    white-space: nowrap;
    color: #b4b4b4;
    font-size: 12px;
    height: 100%;
}
.tab.dim {
    color: #727272;
    margin-left: 11px;
    gap: 6px;
    font-size: 11.500px;
    letter-spacing: -.3px;
}
.tab.dim .ko {
    font-size: 15px;
    color: #8e8e8e;
}
.tab.active {
    border-bottom: 2px solid #b4b4b4;
    height: 26px;
    padding-top: 3px;
}
.project-tabs {
    align-items: flex-start;
}
.project-tabs .swatch {
    margin-top: 8px;
}

/* projeto */
.project {
    display: flex;
    flex-direction: column;
    width: 315px;
}
.proj-tab {
    width: 56px;
    margin-left: 6px;
    padding-left: 2px;
    gap: 9px;
}
.fx-swatch {
    margin-left: 37px;
}
.info {
    display: flex;
    height: 111px;
    padding: 6px 0 0 2px;
}
.thumb {
    width: 112px;
    height: 65px;
    background-color: #fff;
    border: 1px solid #000;
}
.info-text {
    margin-left: 6px;
    font-size: 12px;
    line-height: 13px;
    position: relative;
    flex: 1;
}
.info-text > div:first-child {
    display: flex;
    align-items: center;
    white-space: nowrap;
    margin-top: 1px;
}
.info-name {
    color: #b4b4b4;
    font-size: 12.500px;
    letter-spacing: .5px;
}
.info-tri {
    margin-left: 5px;
    color: #e0e0e0;
}
.info-used {
    margin-left: 4px;
    white-space: pre;
}
.info-size {
    color: #9a9a9a;
    font-size: 11px;
    letter-spacing: -.15px;
}
.info-rgb {
    margin-top: 50px;
    color: #8e8e8e;
    font-size: 11px;
    letter-spacing: -.45px;
}
.project-search {
    width: 306px;
    margin-left: 2px;
}
.list-head {
    display: flex;
    align-items: center;
    height: 21px;
    margin-top: 6px;
    background-color: #333;
    border-top: 1px solid #0c0c0c;
    border-bottom: 1px solid #0c0c0c;
}
.list-name {
    margin-left: 11px;
    padding-left: 6px;
    border-left: 1px solid #555;
    color: #8a8a8a;
    font-size: 10.500px;
}
.rows {
    width: 297px;
    position: relative;
    font-size: 12.500px;
}
.flow-icon {
    position: absolute;
    left: 299px;
    top: 3px;
}
.row {
    display: flex;
    align-items: center;
    height: 19px;
    padding-left: 12px;
    border-bottom: 1px solid #2a2a2a;
    color: #989898;
    white-space: nowrap;
}
.row .low {
    padding-top: 3px;
}
.r-ic {
    margin-right: 4px;
}
.r-ic.file {
    margin: 0 6px 0 2px;
}
.row .ko {
    font-size: 14px;
    color: #a8a8a8;
}
.row .tight {
    letter-spacing: -.6px;
}
.folder-row {
    padding-left: 0;
}
.fold-chev {
    color: #999;
    margin: 0 5px 0 0;
}
.folder {
    margin: -3px 5px 0 0;
}
.solid {
    padding-left: 31px;
    gap: 4px;
}
.chip {
    width: 16px;
    height: 18px;
    background-color: #000;
    flex: none;
}
.chip.white {
    background-color: #fff;
    border: 1px solid #000;
}
.sel {
    background: linear-gradient(90deg, #303030 48px, #9a9a9a 48px);
    color: #111;
    font-weight: 700;
    letter-spacing: .55px;
}
.sel-name {
    color: #161616;
}
.project-foot {
    display: flex;
    align-items: center;
    height: 19px;
    margin-top: auto;
    border-top: 1px solid #111;
    padding-top: 2px;
}
.f-folder { margin-left: 10px; }
.f-comp { margin-left: 10px; }
.f-rocket { margin-left: 10px; }
.bpc {
    display: flex;
    align-items: center;
    justify-content: space-between;
    width: 52px;
    height: 17px;
    margin-left: 4px;
    padding: 0 5px 0 14px;
    background-color: #1c1c1c;
    border: 1px solid #2e2e2e;
    border-radius: 3px;
    color: #8e8e8e;
    font-size: 10.500px;
}
.trash { margin-left: 7px; }
.pill {
    width: 33px;
    height: 16px;
    margin-left: 9px;
    border-radius: 8px;
    background-color: #3a3a3a;
}

/* composicao */
.comp {
    display: flex;
    flex-direction: column;
    width: 1161px;
    margin-left: 5px;
}
.comp-tabs {
    padding-left: 12px;
}
.comp-tabs .swatch {
    margin-left: 6px;
}
.lock {
    margin: -4px 0 0 10px;
}
.comp-title {
    margin-left: 8px;
    gap: 3px;
    color: #c8c8c8;
}
.comp-word {
    letter-spacing: -.3px;
}
.comp-title .ko {
    font-size: 14px;
}
.comp-tabs .menu {
    margin-left: 9px;
}
.crumbs {
    height: 24px;
    padding: 2px 0 0 19px;
}
.crumb {
    display: block;
    width: 88px;
    height: 18px;
    padding-left: 8px;
    line-height: 16px;
    background-color: #1a1a1a;
    border: 1px solid #2c2c2c;
    border-radius: 3px;
    font-size: 14px;
}
.viewer {
    position: relative;
    height: 476px;
    border-top: 1px solid #000;
    border-bottom: 1px solid #000;
    overflow: hidden;
}
.guide {
    position: absolute;
    top: 0;
    bottom: 0;
    width: 1px;
    background-color: #8a3232;
}
.guide.left { left: 81px; }
.guide.right { left: 1079px; }
.canvas {
    position: absolute;
    left: 100px;
    top: 1px;
    width: 960px;
    height: 540px;
    background-color: #fff;
}
.glyph {
    position: absolute;
    left: 282px;
    top: 128px;
    color: #000;
    font-family: "Noto Sans CJK KR", sans-serif;
    font-weight: 900;
    font-size: 174px;
    line-height: 1;
    -webkit-text-stroke: 3px #000;
    transform: scaleX(.92) skewX(-8deg);
}
.handle {
    position: absolute;
    width: 8px;
    height: 8px;
    background-color: #b23333;
    box-shadow: 1px 1px 0 #aaa;
}
.h-tl { left: 280px; top: 122px; }
.h-tc { left: 364px; top: 122px; }
.h-tr { left: 447px; top: 122px; }
.h-ml { left: 280px; top: 214px; }
.h-mr { left: 447px; top: 214px; }
.h-bl { left: 280px; top: 306px; }
.h-bc { left: 364px; top: 306px; }
.h-br { left: 447px; top: 306px; }
.anchor {
    position: absolute;
    left: 342px;
    top: 281px;
}
.viewer-foot {
    display: flex;
    align-items: center;
    height: 23px;
}
.drop {
    display: flex;
    align-items: center;
    height: 18px;
    padding: 0 5px 0 7px;
    background-color: #1c1c1c;
    border: 1px solid #2e2e2e;
    border-radius: 3px;
    color: #a8a8a8;
    font-size: 12px;
    flex: none;
}
.v1 { margin-left: 5px; }
.v2 { margin-left: 9px; }
.v3 { margin-left: 8px; }
.zoom-drop { width: 69px; margin-left: 3px; }
.v4 { margin-left: 5px; }
.mask-btn {
    display: flex;
    align-items: center;
    justify-content: center;
    width: 22px;
    height: 20px;
    margin-left: 4px;
    background-color: #1c1c1c;
    border-radius: 3px;
}
.time-box { width: 68px; margin-left: 1px; justify-content: center; padding: 0; color: #8c8c8c; }
.v5 { margin-left: 4px; }
.v6 { margin-left: 8px; }
.v7 { margin-left: 8px; }
.full-drop { width: 85px; margin-left: 6px; }
.v8 { margin-left: 5px; }
.v9 { margin-left: 9px; }
.cam-drop { width: 104px; margin-left: 5px; }
.view-drop { width: 69px; margin-left: 3px; }
.v10 { margin-left: 4px; }
.fast-btn {
    display: flex;
    align-items: center;
    justify-content: center;
    width: 20px;
    height: 23px;
    margin-left: 5px;
    background-color: #1b1b1b;
}
.v11 { margin-left: 5px; }
.v12 { margin-left: 8px; }
.foot-sep {
    width: 1px;
    height: 23px;
    margin-left: 5px;
    background-color: #2f2f2f;
}
.v13 { margin-left: 5px; }
.exposure { margin-left: 8px; font-size: 12px; }

/* character */
.char-col {
    display: flex;
    flex-direction: column;
    width: 206px;
    margin-left: 4px;
}
.character {
    height: 423px;
    border: 1px solid #2d8ceb;
    padding-top: 0;
}
.char-tabs {
    height: 25px;
    overflow: hidden;
    position: relative;
}
.para {
    margin-left: 0;
    width: 85px;
    color: #8e8e8e;
    padding-top: 3px;
}
.tab.char-tab {
    gap: 12px;
    padding: 3px 0 0 2px;
    width: 70px;
    height: 25px;
}
.more-tabs {
    margin-left: 36px;
    padding-top: 2px;
    font-size: 16px;
    font-weight: 700;
    color: #c0c0c0;
}
.font-block {
    display: flex;
    padding: 10px 0 0 4px;
    height: 58px;
    position: relative;
}
.font-selects {
    display: flex;
    flex-direction: column;
    gap: 5px;
    width: 122px;
}
.font-selects .select {
    height: 19px;
    font-size: 12px;
    padding-right: 5px;
    position: relative;
    color: #c0c0c0;
}
.font-selects .select::after {
    content: "";
    position: absolute;
    right: 17px;
    top: 0;
    bottom: 0;
    width: 1px;
    background-color: #333;
}
.font-tools {
    display: flex;
    flex-direction: column;
    margin-left: 5px;
    gap: 5px;
}
.stroke-toggle {
    display: block;
    width: 20px;
    height: 17px;
    border: 1px solid #2d8ceb;
    background: linear-gradient(#111 47%, #2d8ceb 47%, #2d8ceb 53%, #fff 53%);
}
.color-box {
    position: relative;
    width: 44px;
    height: 43px;
    margin-left: 4px;
}
.stroke-swatch {
    position: absolute;
    right: 0;
    bottom: 0;
    width: 30px;
    height: 29px;
    border: 1px solid #000;
    background: linear-gradient(135deg, #fff 48%, #c4141c 48%, #c4141c 53%, #fff 53%);
}
.fill-swatch {
    position: absolute;
    left: 0;
    top: 0;
    width: 30px;
    height: 30px;
    background-color: #000;
    box-shadow: 4px 4px 0 #232323;
    z-index: 1;
}
.mini-swatch {
    position: absolute;
    left: 1px;
    bottom: 1px;
    width: 11px;
    height: 11px;
    border: 1px solid #888;
    background: linear-gradient(135deg, #eee 46%, #c4141c 46%, #c4141c 54%, #eee 54%);
    z-index: 2;
}
.swap {
    position: absolute;
    right: 1px;
    top: 3px;
}
.sep {
    height: 2px;
    margin: 0 5px 0 4px;
    background-color: #2e2e2e;
}
.metrics {
    display: grid;
    grid-template-columns: 105px 90px;
    grid-auto-rows: 21px;
    padding-left: 4px;
    margin-top: 2px;
}
.metric {
    display: flex;
    align-items: center;
    width: 76px;
    font-size: 12px;
}
.metric.col-b {
    width: 83px;
}
.m-ic {
    display: block;
    position: relative;
    width: 18px;
    height: 18px;
    flex: none;
    color: #b8b8b8;
    font-family: "Liberation Serif", serif;
    font-size: 13px;
    line-height: 18px;
    text-align: center;
}
.m-ic svg {
    position: absolute;
}
.val {
    color: #2d8ceb;
    margin-left: 7px;
}
.col-b .val {
    margin-left: 14px;
}
.val.off {
    color: #4e4e4e;
    font-size: 11.500px;
    letter-spacing: -.1px;
}
.unit {
    margin-left: 5px;
    color: #8b8b8b;
}
.unit.pct {
    margin-left: 4px;
}
.metric .tri,
.stroke-row .tri {
    margin-left: auto;
    color: #a0a0a0;
}
.t-big b { font-size: 13px; position: absolute; left: 0; top: 3px; }
.t-big b.up { font-size: 22px; left: 6px; top: -2px; }
.t-lead { font-family: "Liberation Sans", sans-serif; font-size: 9px; line-height: 8px; padding: 1px 0 0 5px; }
.t-lead span { display: block; border-bottom: 1px solid #b8b8b8; }
.t-lead .arr-v { left: 0; top: 3px; }
.t-kern { font-family: "Liberation Sans", sans-serif; font-size: 12px; line-height: 13px; letter-spacing: -1px; text-align: left; }
.t-kern .arr-h { left: 6px; top: 13px; }
.t-track { font-family: "Liberation Sans", sans-serif; font-size: 12px; }
.t-track span {
    display: block;
    height: 13px;
    background-color: #b0b0b0;
    color: #232323;
    font-weight: 700;
    line-height: 13px;
}
.t-track .arr-h { left: 0; top: 14px; }
.t-vs b { position: absolute; left: 4px; top: -1px; font-size: 20px; }
.t-vs .arr-v { left: 0; top: 2px; }
.t-hs b { position: absolute; left: 3px; top: -4px; font-size: 20px; }
.t-hs .arr-h { left: 0; top: 14px; }
.t-base { font-family: "Liberation Sans", sans-serif; font-size: 12px; line-height: 14px; border-bottom: 1px solid #b8b8b8; height: 14px; text-align: left; }
.t-base sup { font-size: 8px; line-height: 0; }
.t-base .arr-base { left: 12px; top: 12px; }
.t-tsume { font-family: "Noto Sans CJK JP", sans-serif; font-size: 11px; line-height: 13px; }
.t-tsume span { display: block; border: 1px dotted #777; height: 14px; margin: 0 2px; }
.t-tsume .arr-h { left: 1px; top: 15px; }
.s-two { margin-top: 5px; }
.stroke-row {
    display: flex;
    align-items: center;
    height: 18px;
    margin: 4px 0 7px 6px;
    font-size: 12px;
    width: 193px;
}
.stroke-ic { margin-right: 3px; }
.dash { margin-left: 7px; }
.stroke-row .tri {
    margin-left: 24px;
}
.stroke-select {
    width: 114px;
    height: 18px;
    margin-left: 5px;
    background-color: #232323;
}
.s-four { margin-top: 6px; }
.type-row {
    display: flex;
    align-items: center;
    height: 21px;
    margin: 4px 0 0 23px;
    font-family: "Liberation Serif", serif;
    font-size: 16px;
    color: #b8b8b8;
}
.type-btn {
    display: block;
    width: 25px;
    height: 21px;
    margin-right: 1px;
    background-color: #191919;
    border: 1px solid #2c2c2c;
    border-radius: 3px;
    color: #2d8ceb;
    font-weight: 700;
    text-align: center;
    line-height: 19px;
}
.ital-t {
    font-style: italic;
}
.type-plain {
    flex: none;
    letter-spacing: .5px;
}
.type-plain small { font-size: 12px; }
.type-plain sup, .type-plain sub { font-size: 9px; line-height: 0; }
.tt { margin-left: 7px; width: 25px; }
.ts { width: 32px; }
.sup { width: 25px; }
.check-row {
    display: flex;
    align-items: center;
    height: 13px;
    margin: 10px 0 0 11px;
    color: #8b8b8b;
    font-size: 12px;
}
.check {
    width: 13px;
    height: 13px;
    border: 2px solid #6a6a6a;
    border-radius: 2px;
    margin-right: 5px;
}
.check.c2 { margin-left: 35px; }
.align {
    height: 124px;
    margin-top: 4px;
    padding-top: 5px;
}
.align-head {
    display: flex;
    align-items: center;
    height: 20px;
    padding-left: 13px;
    gap: 11px;
    color: #b4b4b4;
    font-size: 12px;
}
.align-to {
    display: flex;
    align-items: center;
    height: 18px;
    margin-top: 6px;
    padding-left: 7px;
    font-size: 11.500px;
}
.align-to .label {
    width: 79px;
    letter-spacing: -.3px;
    flex: none;
}
.comp-select {
    width: 110px;
    height: 18px;
    margin-left: 7px;
    font-size: 12px;
}
.align-icons {
    display: flex;
    justify-content: space-between;
    margin: 7px 7px 0 11px;
    color: #b0b0b0;
}
.s-align { margin: 3px 5px 0 6px; }
.dist-label {
    margin: 2px 0 0 7px;
    color: #727272;
    font-size: 11.500px;
    line-height: 14px;
}
.align-icons.dist {
    margin-top: 3px;
    color: #454545;
}

/* coluna direita */
.right-col {
    display: flex;
    flex-direction: column;
    width: 193px;
    margin-left: 4px;
}
.tracker {
    display: flex;
    align-items: center;
    height: 28px;
    padding: 2px 0 0 13px;
    color: #a8a8a8;
    font-size: 12px;
}
.tracker-btn {
    display: flex;
    align-items: center;
    width: 12px;
    height: 18px;
    margin-left: auto;
    overflow: hidden;
    border: 1px solid #333;
    border-right: 0;
    border-radius: 3px 0 0 3px;
    padding-left: 5px;
}
.wiggler {
    flex: 1;
    margin-top: 4px;
    font-size: 12px;
    overflow: hidden;
}
.wig-head {
    display: flex;
    align-items: center;
    gap: 12px;
    height: 28px;
    padding: 2px 0 0 13px;
    margin-bottom: 7px;
    color: #a8a8a8;
}
.wig-row {
    display: flex;
    align-items: center;
    height: 22px;
}
.wig-row .label {
    width: 72px;
    text-align: right;
    flex: none;
}
.wig-row .select {
    width: 125px;
    height: 18px;
    margin-left: 3px;
    flex: none;
}
.wig-row .select.off {
    background-color: #2a2a2a;
    border-color: #2a2a2a;
    color: #484848;
    letter-spacing: .4px;
}
.wig-row .select.off .chev {
    color: #484848;
}
.wig-val {
    margin-left: 5px;
}
.wig-row .label.per {
    margin-left: 19px;
    width: auto;
}
.apply-btn {
    position: absolute;
    left: 127px;
    top: 138px;
    width: 70px;
    height: 20px;
    padding-left: 21px;
    line-height: 20px;
    border-radius: 10px;
    background-color: #2a2a2a;
    color: #484848;
}

/* linha do tempo */
.timeline {
    display: flex;
    flex-direction: column;
    width: 1703px;
}
.tl-tabs {
    display: flex;
    align-items: center;
    height: 28px;
    flex: none;
    font-size: 12px;
    color: #8e8e8e;
}
.t1 { margin-left: 21px; }
.n1 { margin-left: 13px; width: 93px; font-size: 15px; }
.n2 { margin-left: 13px; width: 81px; font-size: 15px; }
.n3 { margin-left: 13px; width: 71px; font-size: 15px; }
.rq { width: 111px; }
.tl-active {
    display: flex;
    align-items: center;
    align-self: flex-start;
    width: 112px;
    height: 25px;
    padding-top: 2px;
    border-bottom: 2px solid #b4b4b4;
    color: #b8b8b8;
}
.tl-active .swatch {
    margin-left: 7px;
    height: 11px;
}
.tl-cur {
    margin-left: 11px;
    font-size: 14px;
    width: 67px;
    white-space: nowrap;
}
.tl-body {
    display: flex;
    flex: 1;
    min-height: 0;
}
.tl-left {
    width: 717px;
    flex: none;
}
.tl-controls {
    display: flex;
    align-items: flex-start;
    height: 36px;
    border-bottom: 1px solid #0c0c0c;
}
.timecode {
    width: 104px;
    padding-left: 6px;
    flex: none;
}
.tc-main {
    margin-left: 4px;
    color: #2d8ceb;
    font-size: 18px;
    font-weight: 500;
    line-height: 20px;
    margin-top: 3px;
    letter-spacing: -.3px;
}
.tc-sub {
    color: #17589c;
    font-size: 12px;
    line-height: 11px;
}
.tl-search {
    width: 411px;
    margin-top: 7px;
}
.tc1 { margin: 9px 0 0 15px; }
.tc2 { margin: 6px 0 0 16px; }
.tc3 { margin: 9px 0 0 16px; }
.tc4 { margin: 7px 0 0 12px; }
.tc5 { margin: 7px 0 0 11px; }
.tc6 { margin: 6px 0 0 18px; }
.tl-head {
    display: flex;
    align-items: center;
    height: 19px;
    background-color: #333;
    border-bottom: 1px solid #0c0c0c;
    color: #bbb;
    position: relative;
}
.hd { margin-right: 0; flex: none; }
.eye-hd { margin-left: 2px; }
.spk { margin-left: 4px; }
.dot {
    width: 7px;
    height: 7px;
    margin-left: 6px;
    border-radius: 50%;
    background-color: #c0c0c0;
}
.lock-hd { margin-left: 6px; }
.head-sep {
    width: 1px;
    height: 14px;
    background-color: #111;
    flex: none;
}
.s1 { margin-left: 7px; }
.tag { margin-left: 14px; }
.s2 { margin-left: 5px; }
.num { margin-left: 5px; font-size: 9px; color: #999; }
.period { margin-left: 7px; color: #999; }
.s3 { margin-left: 9px; }
.src {
    margin-left: 5px;
    color: #8a8a8a;
    font-size: 10.500px;
    white-space: nowrap;
    flex: none;
}
.src-name { width: 263px; }
.sw { flex: none; color: #c0c0c0; }
.sw1 { margin-left: 5px; }
.sw2 { margin-left: 2px; }
.sw3 { margin-left: 4px; }
.sw4 { margin-left: 4px; width: 12px; font-family: "Liberation Serif", serif; font-style: italic; font-size: 14px; }
.sw5 { margin-left: 2px; }
.sw6 { margin-left: 3px; }
.sw7 { margin-left: 2px; }
.sw8 { margin-left: 3px; }
.s5 { margin-left: 14px; }
.mode { margin-left: 5px; width: 72px; }
.t-col { margin-left: 0; width: 14px; }
.trk { margin-left: 0; width: 69px; }
.layer {
    display: flex;
    align-items: center;
    height: 16px;
    margin-bottom: 1px;
    background-color: #333;
    font-size: 12px;
}
.layer.first {
    background-color: #434343;
}
.cell {
    display: flex;
    align-items: center;
    justify-content: center;
    height: 14px;
    width: 14px;
    background-color: #2b2b2b;
    flex: none;
    color: #c0c0c0;
}
.layer.first .cell {
    background-color: #3a3a3a;
}
.eye-cell { width: 13px; background-color: #3d3d3d !important; }
.c-a { margin-left: 17px; }
.c-b { margin-left: 1px; }
.lay-chev { margin-left: 13px; color: #aaa; }
.label-red {
    width: 12px;
    height: 13px;
    margin-left: 5px;
    background-color: #b23333;
    flex: none;
}
.lay-num {
    width: 10px;
    margin-left: 10px;
    color: #a8a8a8;
    font-weight: 700;
    font-size: 13px;
}
.lay-type {
    margin-left: 20px;
    width: 14px;
    font-family: "Liberation Serif", serif;
    font-size: 14px;
    color: #c0c0c0;
}
.name-edit {
    display: block;
    width: 250px;
    height: 15px;
    line-height: 12px;
    padding-left: 3px;
    background-color: #555;
    border: 2px solid #a8a8a8;
    color: #ccc;
    font-size: 14px;
    overflow: hidden;
    flex: none;
}
.lay-chip {
    width: 14px;
    height: 14px;
    margin-left: 18px;
    background-color: #fff;
    border: 1px solid #000;
    flex: none;
}
.lay-name {
    width: 252px;
    padding-left: 6px;
    color: #a0a0a0;
    font-weight: 700;
    font-size: 12.500px;
    letter-spacing: .55px;
    flex: none;
}
.c-shy { margin-left: 4px; background-color: #2b2b2b !important; }
.c-sun { margin-left: 1px; color: #777; }
.c-slash { margin-left: 2px; }
.c-1 { margin-left: 30px; }
.c-2 { margin-left: 1px; }
.mode-drop {
    display: flex;
    align-items: center;
    width: 69px;
    height: 14px;
    margin-left: 17px;
    padding: 0 4px 0 7px;
    background-color: #1a1a1a;
    color: #b0b0b0;
    flex: none;
}
.c-t { margin-left: 5px; }
.mode-drop.none {
    width: 65px;
    margin-left: 6px;
}

.tl-right {
    position: relative;
    flex: 1;
    border-left: 1px solid #0c0c0c;
    overflow: hidden;
}
.nav-gap {
    height: 6px;
}
.nav-bar {
    position: relative;
    width: 966px;
    height: 8px;
    background-color: #666;
    box-shadow: 0 -1px 0 #000;
}
.grip {
    position: absolute;
    top: 0;
    bottom: 0;
    width: 6px;
    background-color: #2d8ceb;
}
.grip.left { left: 0; border-radius: 4px 0 0 4px; }
.grip.right { right: 0; border-radius: 0 4px 4px 0; }
.grip.big { bottom: -1px; }
.ruler {
    display: flex;
    justify-content: space-between;
    width: 961px;
    height: 21px;
    padding-left: 6px;
    font-size: 12px;
    color: #9a9a9a;
}
.tick {
    display: flex;
    flex-direction: column;
    align-items: center;
    justify-content: flex-end;
    width: 0;
    height: 20px;
    line-height: 13px;
}
.tick.first em {
    margin-left: 12px;
}
.tick i {
    display: block;
    width: 1px;
    height: 4px;
    background-color: #777;
    flex: none;
}
.work-area {
    width: 966px;
    border-top: 1px solid #000;
    height: 20px;
    background-color: #232323;
}
.work-bar {
    position: relative;
    height: 15px;
    background-color: #666;
}
.green {
    height: 4px;
    margin: 1px 0 0 7px;
    width: 952px;
    background-color: #13b42a;
}
.tracks {
    height: 264px;
    padding: 0 26px 0 7px;
    background: linear-gradient(90deg, #2b2b2b 7px, #303030 7px, #303030 959px, #232323 959px);
    border-top: 1px solid #000;
}
.track {
    height: 16px;
    margin-bottom: 1px;
}
.track.one { background-color: #a34a4a; border-top: 1px solid #c07878; }
.track.two { background-color: #7b3a3a; }
.cti {
    position: absolute;
    left: 0;
    top: 19px;
}
.playhead {
    position: absolute;
    left: 6px;
    top: 33px;
    bottom: 0;
    width: 1px;
    background-color: #2d8ceb;
}
.end-mark {
    position: absolute;
    left: 967px;
    top: 36px;
}
.lift-mark {
    position: absolute;
    left: 968px;
    top: 55px;
}

/* efeitos */
.effects {
    width: 181px;
    margin-left: 4px;
    overflow: hidden;
}
.fx-head {
    display: flex;
    align-items: center;
    height: 29px;
    padding-left: 13px;
    gap: 12px;
    color: #a8a8a8;
    font-size: 12px;
    letter-spacing: -.3px;
}
.fx-search {
    width: 176px;
    margin: 1px 0 0 5px;
}
.fx-list {
    margin-top: 5px;
    border-top: 1px solid #0c0c0c;
}
.fx-row {
    display: flex;
    align-items: center;
    height: 17px;
    padding-left: 7px;
    gap: 5px;
    border-bottom: 1px solid #2c2c2c;
    color: #8f9296;
    font-size: 12px;
    letter-spacing: .15px;
    white-space: nowrap;
}
.fx-row svg {
    color: #999;
    margin-top: -2px;
}
```
